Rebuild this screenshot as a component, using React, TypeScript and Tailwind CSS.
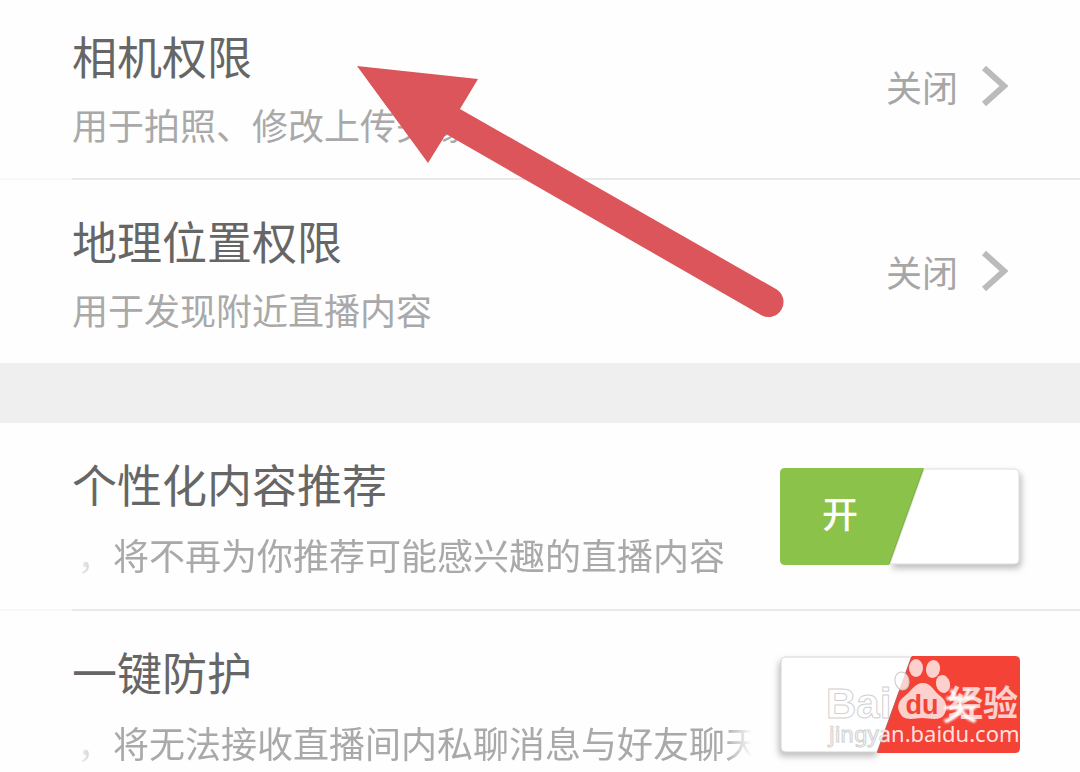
import { useState, type ReactNode } from 'react'
import clsx from 'clsx'

interface LinkRowProps {
  title: string
  description: string
  status: string
  first?: boolean
}

function Divider() {
  return (
    <div className="flex h-[2px]">
      <div className="w-[72px] bg-[#f8f8f8]" />
      <div className="flex-1 bg-[#e9e9e9]" />
    </div>
  )
}

function LinkRow({ title, description, status, first }: LinkRowProps) {
  return (
    <button
      type="button"
      className={clsx('flex w-full items-center pr-[72px] pb-[22px] pl-[72px] text-left', first ? 'pt-5' : 'pt-[25px]')}
    >
      <span className="min-w-0 flex-1">
        <span className="block text-[45px] leading-[72px] text-[#666666]">{title}</span>
        <span className="block text-[36px] leading-[64px] whitespace-nowrap text-[#a9a9a9]">{description}</span>
      </span>
      <span className="flex items-center gap-6">
        <span className="pb-1 text-[36px] leading-[48px] text-[#a6a6a6]">{status}</span>
        <svg className="mb-1 h-[42px] w-[26px]" viewBox="0 0 26 42" fill="none" aria-hidden="true">
          <path d="M2 3 L22 21 L2 39" stroke="#bbbbbb" strokeWidth="6" />
        </svg>
      </span>
    </button>
  )
}

function Toggle({ checked, onChange, label }: { checked: boolean; onChange: (next: boolean) => void; label: string }) {
  return (
    <button
      type="button"
      role="switch"
      aria-checked={checked}
      aria-label={label}
      onClick={() => onChange(!checked)}
      className="relative flex h-[97px] w-[240px] text-[36px] font-medium text-white"
    >
      <svg className="absolute inset-0 h-full w-full overflow-visible" viewBox="0 0 240 97" aria-hidden="true">
        {checked ? (
          <>
            <path
              className="drop-shadow-[2px_4px_3px_rgba(0,0,0,0.25)]"
              d="M144 1 H234 Q239 1 239 6 V91 Q239 96 234 96 H110 Z"
              fill="#fff"
              stroke="#dddddd"
            />
            <path d="M5 0 H144 L109 97 H5 Q0 97 0 92 V5 Q0 0 5 0 Z" fill="#8bc34a" />
            <path d="M143 1 L109 96" stroke="#7fb045" strokeWidth="1" />
          </>
        ) : (
          <>
            <path
              className="drop-shadow-[-2px_4px_3px_rgba(0,0,0,0.25)]"
              d="M132 1 H6 Q1 1 1 6 V91 Q1 96 6 96 H97 Z"
              fill="#fff"
              stroke="#d4d4d4"
            />
            <path d="M132 0 H235 Q240 0 240 5 V92 Q240 97 235 97 H97 Z" fill="#f44336" />
            <path d="M132 1 L98 96" stroke="#d6504a" strokeWidth="2" />
          </>
        )}
      </svg>
      <span
        className={clsx('relative w-[120px] text-center', checked ? 'leading-[88px]' : 'ml-[120px] leading-[96px] blur-[1px]')}
      >
        {checked ? '开' : '关'}
      </span>
    </button>
  )
}

interface SwitchRowProps {
  title: string
  description: string
  defaultChecked: boolean
  children?: ReactNode
}

function SwitchRow({ title, description, defaultChecked, children }: SwitchRowProps) {
  const [checked, setChecked] = useState(defaultChecked)

  return (
    <div className="flex items-center gap-7 pt-[25px] pr-[60px] pb-[23px] pl-[72px]">
      <div className="min-w-0 flex-1">
        <h2 className="text-[45px] leading-[72px] text-[#666666]">{title}</h2>
        {/* Scrolling hint, faded out at both ends */}
        <p className="mt-[2px] overflow-hidden mask-r-from-[96%] mask-l-from-[94%] pl-[5px] text-[36px] leading-[64px] whitespace-nowrap text-[#a9a9a9]">
          {description}
        </p>
      </div>
      <div className="relative mb-[2px] flex">
        <Toggle checked={checked} onChange={setChecked} label={title} />
        {children}
      </div>
    </div>
  )
}

function Watermark() {
  return (
    <svg
      className="pointer-events-none absolute top-0 right-0 h-[97px] w-[200px] overflow-visible"
      viewBox="0 0 200 97"
      fill="#ffffff"
      fillOpacity="0.75"
    >
      <defs>
        {/* Outline only where the mark sits on white */}
        <linearGradient id="outline" gradientUnits="userSpaceOnUse" x1="0" y1="0" x2="200" y2="0">
          <stop offset="0.3" stopColor="#c4c4c4" stopOpacity="0.8" />
          <stop offset="0.36" stopColor="#ffffff" stopOpacity="0" />
        </linearGradient>
      </defs>
      <text
        x="6"
        y="62"
        fontSize="42"
        fontWeight="700"
        stroke="#c4c4c4"
        strokeOpacity="0.8"
        fontFamily="Liberation Sans, Arial, sans-serif"
      >
        Bai
      </text>
      <ellipse cx="82" cy="25" rx="7" ry="9" transform="rotate(-12 82 25)" stroke="#c8c8c8" />
      <ellipse cx="96" cy="12" rx="7" ry="9" />
      <ellipse cx="113" cy="13" rx="7" ry="9" transform="rotate(10 113 13)" />
      <ellipse cx="123" cy="28" rx="7" ry="9" transform="rotate(-15 123 28)" />
      <path d="M103 27 C111 27 113 34 119 39 C126 44 128 51 125 57 C121 66 111 62 102 62 C94 62 84 66 80 57 C76 50 79 44 86 39 C92 34 95 27 103 27 Z" />
      <text
        x="102"
        y="58"
        fontSize="27"
        fontWeight="700"
        fill="#f44336"
        fillOpacity="1"
        textAnchor="middle"
        fontFamily="Liberation Sans, Arial, sans-serif"
      >
        du
      </text>
      <text x="128" y="60" fontSize="35" fontWeight="700" fontFamily="Noto Sans CJK SC, sans-serif">
        经验
      </text>
      <text
        x="9"
        y="86"
        fontSize="22"
        fillOpacity="0.85"
        stroke="url(#outline)"
        fontFamily="Noto Sans, sans-serif"
      >
        jingyan.baidu.com
      </text>
    </svg>
  )
}

function PointerArrow() {
  return (
    <svg
      className="pointer-events-none absolute top-[66px] left-[357px] h-[252px] w-[428px]"
      viewBox="357 66 428 252"
      fill="#db555a"
      aria-hidden="true"
    >
      <path d="M357 66 L478 79 L460 109 L776 289 A15 15 0 0 1 761 315 L446 134 L428 163 Z" />
    </svg>
  )
}

export default function App() {
  return (
    <main className="relative overflow-hidden bg-[#fefefe] font-['Noto_Sans_CJK_SC',sans-serif]">
      <section>
        <LinkRow title="相机权限" description="用于拍照、修改上传头像" status="关闭" first />
        <Divider />
        <LinkRow title="地理位置权限" description="用于发现附近直播内容" status="关闭" />
      </section>

      <div className="h-[60px] bg-[#efefef]" />

      <section>
        <SwitchRow title="个性化内容推荐" description="，将不再为你推荐可能感兴趣的直播内容" defaultChecked />
        <Divider />
        <SwitchRow title="一键防护" description="，将无法接收直播间内私聊消息与好友聊天" defaultChecked={false}>
          <Watermark />
        </SwitchRow>
      </section>

      <PointerArrow />
    </main>
  )
}
